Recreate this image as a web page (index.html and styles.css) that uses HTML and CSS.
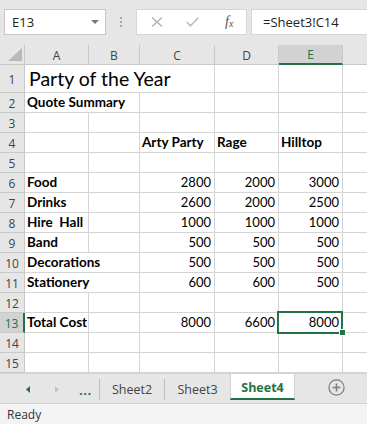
FILE: index.html
```html
<!DOCTYPE html>
<html>
<head>
<meta charset="utf-8">
<link rel="stylesheet" href="styles.css">
</head>
<body>
<div class="app">
  <div class="toolbar">
    <div class="namebox">
      <span class="ref">E13</span>
      <svg class="dd" width="8" height="4" viewBox="0 0 8 4"><path d="M0 0H8L4 4Z" fill="#7a7a7a"/></svg>
    </div>
    <div class="grip"><i></i><i></i><i></i></div>
    <div class="fxbox">
      <svg class="ic" width="12" height="10" viewBox="0 0 12 10"><path d="M1 0.5L11 9.5M11 0.5L1 9.5" stroke="#b0b0b0" stroke-width="1.3" fill="none"/></svg>
      <svg class="ic" width="13" height="10" viewBox="0 0 13 10"><path d="M0.8 5L4.5 8.8L12.2 0.8" stroke="#bdbdbd" stroke-width="1.6" fill="none"/></svg>
      <span class="fx">f<sub>x</sub></span>
    </div>
    <div class="formula">=Sheet3!C14</div>
  </div>

  <div class="sheet">
    <div class="row head">
      <div class="corner"><svg width="14" height="13" viewBox="0 0 14 13"><path d="M14 0V13H0Z" fill="#b9b9b9"/></svg></div>
      <div class="ch">A</div><div class="ch">B</div><div class="ch">C</div><div class="ch">D</div><div class="ch sel-col">E</div><div class="ch last"></div>
    </div>
    <div class="row tall">
      <div class="rh">1</div><div class="c s3 title">Party of the Year</div><div class="c"></div><div class="c"></div><div class="c last"></div>
    </div>
    <div class="row">
      <div class="rh">2</div><div class="c s2 b">Quote Summary</div><div class="c"></div><div class="c"></div><div class="c"></div><div class="c last"></div>
    </div>
    <div class="row">
      <div class="rh">3</div><div class="c"></div><div class="c"></div><div class="c"></div><div class="c"></div><div class="c"></div><div class="c last"></div>
    </div>
    <div class="row">
      <div class="rh">4</div><div class="c"></div><div class="c"></div><div class="c b">Arty Party</div><div class="c b">Rage</div><div class="c b">Hilltop</div><div class="c last"></div>
    </div>
    <div class="row">
      <div class="rh">5</div><div class="c"></div><div class="c"></div><div class="c"></div><div class="c"></div><div class="c"></div><div class="c last"></div>
    </div>
    <div class="row">
      <div class="rh">6</div><div class="c b">Food</div><div class="c"></div><div class="c n">2800</div><div class="c n">2000</div><div class="c n">3000</div><div class="c last"></div>
    </div>
    <div class="row">
      <div class="rh">7</div><div class="c b">Drinks</div><div class="c"></div><div class="c n">2600</div><div class="c n">2000</div><div class="c n">2500</div><div class="c last"></div>
    </div>
    <div class="row">
      <div class="rh">8</div><div class="c b">Hire&nbsp; Hall</div><div class="c"></div><div class="c n">1000</div><div class="c n">1000</div><div class="c n">1000</div><div class="c last"></div>
    </div>
    <div class="row">
      <div class="rh">9</div><div class="c b">Band</div><div class="c"></div><div class="c n">500</div><div class="c n">500</div><div class="c n">500</div><div class="c last"></div>
    </div>
    <div class="row">
      <div class="rh">10</div><div class="c s2 b">Decorations</div><div class="c n">500</div><div class="c n">500</div><div class="c n">500</div><div class="c last"></div>
    </div>
    <div class="row">
      <div class="rh">11</div><div class="c s2 b">Stationery</div><div class="c n">600</div><div class="c n">600</div><div class="c n">500</div><div class="c last"></div>
    </div>
    <div class="row">
      <div class="rh">12</div><div class="c"></div><div class="c"></div><div class="c"></div><div class="c"></div><div class="c"></div><div class="c last"></div>
    </div>
    <div class="row">
      <div class="rh sel-row">13</div><div class="c b">Total Cost</div><div class="c"></div><div class="c n">8000</div><div class="c n">6600</div><div class="c n active">8000<span class="selbox"></span><span class="handle"></span></div><div class="c last"></div>
    </div>
    <div class="row">
      <div class="rh">14</div><div class="c"></div><div class="c"></div><div class="c"></div><div class="c"></div><div class="c"></div><div class="c last"></div>
    </div>
    <div class="row">
      <div class="rh">15</div><div class="c"></div><div class="c"></div><div class="c"></div><div class="c"></div><div class="c"></div><div class="c last"></div>
    </div>
  </div>

  <div class="tabs">
    <div class="nav">
      <svg width="4" height="7" viewBox="0 0 4 7"><path d="M4 0V7L0 3.5Z" fill="#217346"/></svg>
      <svg class="next" width="4" height="7" viewBox="0 0 4 7"><path d="M0 0V7L4 3.5Z" fill="#c2c2c2"/></svg>
      <span class="more">...</span>
    </div>
    <div class="tab">Sheet2</div>
    <div class="tab">Sheet3</div>
    <div class="tab on">Sheet4</div>
    <div class="add"><svg width="17" height="17" viewBox="0 0 17 17"><circle cx="8.5" cy="8.5" r="7.6" fill="none" stroke="#7d7d7d" stroke-width="1.2"/><path d="M8.5 4.5V12.5M4.5 8.5H12.5" stroke="#7d7d7d" stroke-width="1.6"/></svg></div>
  </div>
  <div class="status">Ready</div>
</div>
</body>
</html>
```

FILE: styles.css
```css
* { box-sizing: border-box; }
html, body { margin: 0; padding: 0; }
body { width: 367px; height: 424px; overflow: hidden; background: #fff; }

.app { display: flex; flex-direction: column; width: 367px; height: 424px; }

/* toolbar */
.toolbar {
  height: 45px;
  flex: none;
  background: #e6e6e6;
  display: flex;
  align-items: flex-start;
  padding: 9px 0 0 4px;
  font-family: "Open Sans", "Noto Sans", sans-serif;
  color: #333;
}
.namebox {
  width: 102px; height: 26px;
  background: #fff;
  border: 1px solid #c6c6c6;
  display: flex; align-items: center; justify-content: space-between;
  padding: 0 6px 0 7px;
  font-size: 13px;
}
.namebox .ref { color: #222; }
.grip {
  width: 30px; height: 26px;
  display: flex; flex-direction: column; align-items: center; justify-content: center; gap: 2px;
}
.grip i { display: block; width: 2px; height: 2px; background: #a8a8a8; }
.fxbox {
  width: 111px; height: 26px;
  background: #fff;
  border: 1px solid #d6d6d6;
  display: flex; align-items: center;
  padding: 0 0 0 14px;
  gap: 0;
}
.fxbox .ic { margin-right: 23px; }
.fxbox .ic + .ic { margin-right: 26px; }
.fx {
  font-family: "Liberation Serif", serif;
  font-style: italic;
  font-size: 14px;
  color: #555;
  line-height: 1;
}
.fx sub { font-size: 10px; vertical-align: -1px; }
.formula {
  margin-left: 4px;
  flex: 1;
  height: 26px;
  background: #fff;
  border: 1px solid #d6d6d6;
  border-right: none;
  display: flex; align-items: center;
  padding-left: 11px;
  font-size: 13px;
  color: #222;
}

/* sheet */
.sheet { flex: none; height: 328px; overflow: hidden; background: #fff; }
.row {
  display: grid;
  grid-template-columns: 25px 64px 51px 75px 64px 64px 1fr;
  height: 20px;
}
.row.tall { height: 28px; }
.row.head { height: 20px; background: #e6e6e6; }

.corner {
  border-right: 1px solid #c8c8c8;
  border-bottom: 1px solid #c8c8c8;
  display: flex; align-items: flex-end; justify-content: flex-end;
  padding: 0 2px 3px 0;
}
.ch {
  border-right: 1px solid #c8c8c8;
  border-bottom: 1px solid #c8c8c8;
  display: flex; align-items: center; justify-content: center;
  font-family: "Open Sans", "Noto Sans", sans-serif;
  font-size: 12px;
  color: #444;
  padding-top: 1px;
}
.ch.last { border-right: none; }
.ch.sel-col {
  background: #d2d2d2;
  color: #217346;
  border-bottom: 2px solid #217346;
}

.rh {
  background: #e6e6e6;
  border-right: 1px solid #c8c8c8;
  border-bottom: 1px solid #c8c8c8;
  display: flex; align-items: center; justify-content: center;
  font-family: "Open Sans", "Noto Sans", sans-serif;
  font-size: 12px;
  color: #444;
  padding-top: 1px;
}
.rh.sel-row {
  background: #d2d2d2;
  color: #217346;
  border-right: 2px solid #217346;
}

.c {
  border-right: 1px solid #d4d4d4;
  border-bottom: 1px solid #d4d4d4;
  font-family: Lato, "Open Sans", sans-serif;
  font-size: 13px;
  color: #000;
  white-space: nowrap;
  display: flex; align-items: flex-end;
  padding: 0 3px 2px 3px;
  line-height: 16px;
}
.c.last { border-right: none; }
.c.b { font-weight: 700; font-size: 13.5px; padding-left: 2px; }
.c.n { justify-content: flex-end; }
.c.s2 { grid-column: span 2; }
.c.s3 { grid-column: span 3; }
.c.title { font-size: 19.5px; line-height: 24px; padding-bottom: 1px; padding-left: 4px; }

.c.active { position: relative; }
.selbox {
  position: absolute;
  left: -2px; top: -2px; right: -1px; bottom: -2px;
  border: 2px solid #217346;
}
.handle {
  position: absolute;
  right: -4px; bottom: -4px;
  width: 5px; height: 5px;
  background: #217346;
  border: 1px solid #fff;
  box-sizing: content-box;
}

/* tabs */
.tabs {
  flex: none;
  height: 30px;
  background: #e6e6e6;
  border-top: 1px solid #d4d4d4;
  display: flex;
  align-items: stretch;
  font-family: "Open Sans", "Noto Sans", sans-serif;
  font-size: 12.5px;
  color: #444;
}
.nav {
  width: 100px;
  display: flex; align-items: center;
  padding-left: 26px;
  border-right: 1px solid #bdbdbd;
  margin: 5px 0 3px 0;
}
.nav .next { margin-left: 25px; }
.more { color: #217346; font-weight: 700; margin-left: 20px; font-size: 13px; letter-spacing: 0.5px; }
.tab {
  width: 65px;
  display: flex; align-items: center; justify-content: center;
  margin: 5px 0 3px 0;
  border-right: 1px solid #bdbdbd;
}
.tab.on {
  margin: 0 0 3px 0;
  background: #fff;
  color: #217346;
  font-weight: 700;
  border-right: 1px solid #d0d0d0;
  border-left: 1px solid #d0d0d0;
  border-bottom: 2px solid #217346;
  width: 65px;
  padding-top: 2px;
}
.tab:nth-child(3) { border-right: none; }
.add {
  flex: 1;
  display: flex; align-items: center; justify-content: center;
  padding-left: 10px;
  padding-bottom: 2px;
}

/* status */
.status {
  flex: 1;
  background: #f3f3f3;
  border-top: 1px solid #d0d0d0;
  font-family: "Open Sans", "Noto Sans", sans-serif;
  font-size: 12px;
  color: #333;
  padding: 2px 0 0 7px;
}
```
